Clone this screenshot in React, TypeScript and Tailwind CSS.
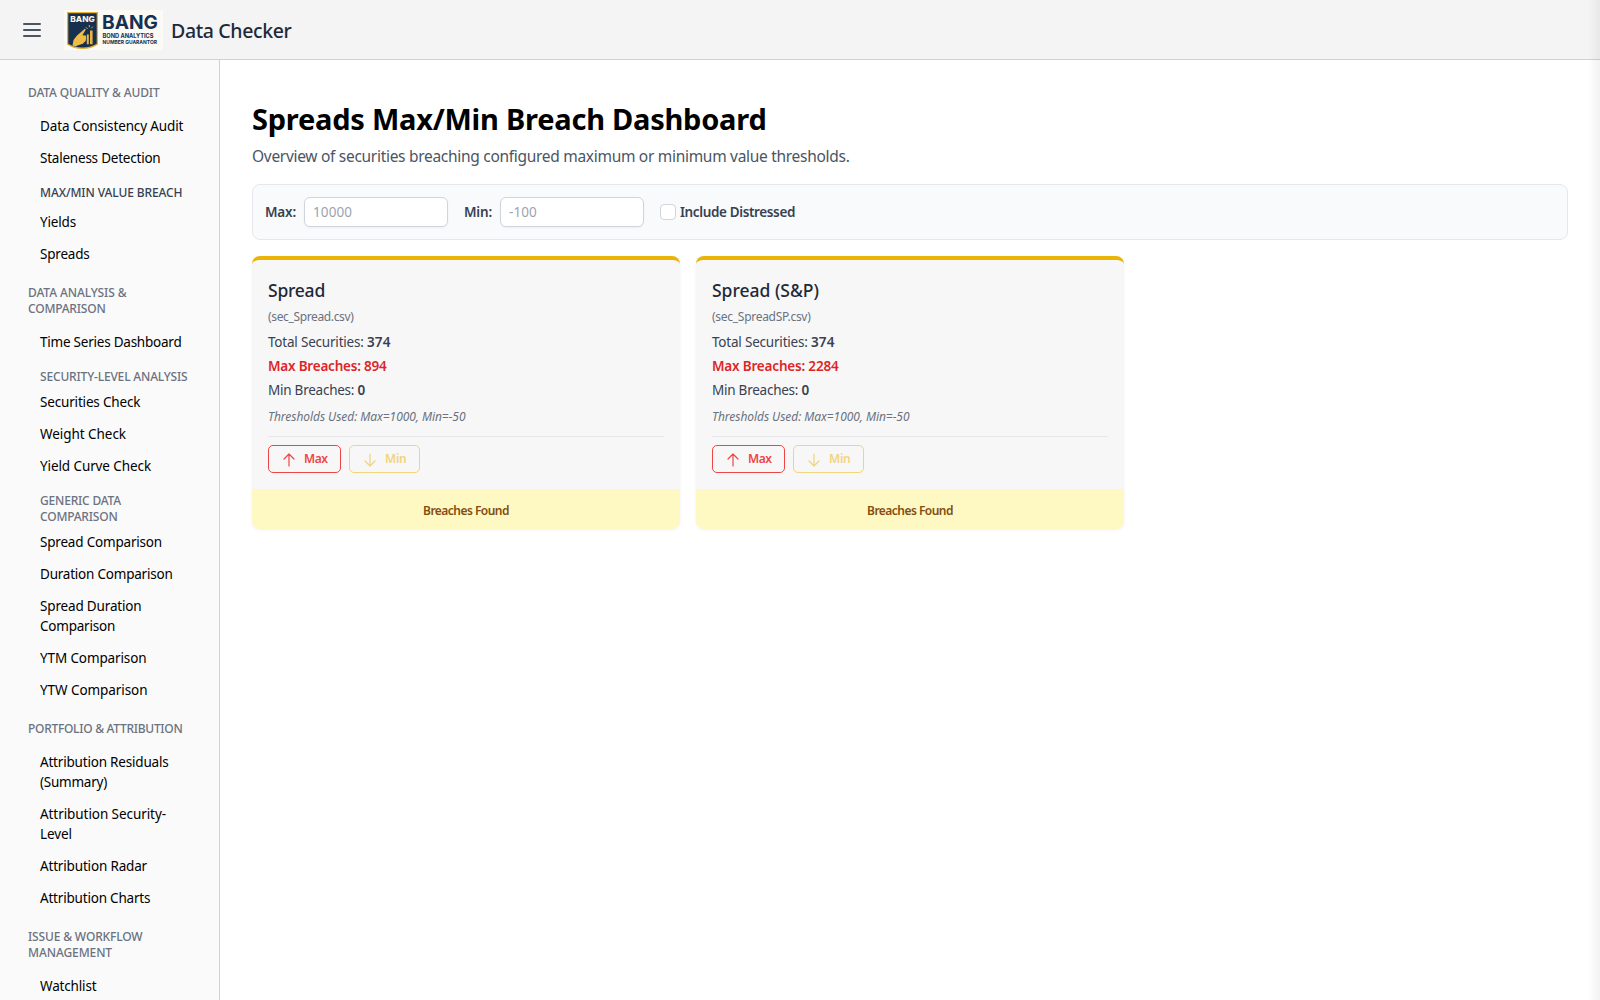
import React from "react";

type Line = { text: string; w: number };

/* One text run stretched or condensed to a fixed advance width. */
function Fit({ text, w, className = "" }: { text: string; w: number; className?: string }) {
  const ref = React.useRef<HTMLSpanElement>(null);
  React.useLayoutEffect(() => {
    const el = ref.current;
    if (!el) return;
    el.style.letterSpacing = "0px";
    const natural = el.getBoundingClientRect().width;
    el.style.letterSpacing = `${(w - natural) / text.length}px`;
  }, [text, w]);
  return (
    <span ref={ref} className={`inline-block whitespace-pre ${className}`}>
      {text}
    </span>
  );
}

const L = (text: string, w: number): Line => ({ text, w });

function Heading({ lines, className }: { lines: Line[]; className: string }) {
  return (
    <h3 className={`flex flex-col items-start pt-px text-[12px] leading-4 font-medium ${className}`}>
      {lines.map((l) => (
        <Fit key={l.text} text={l.text} w={l.w} />
      ))}
    </h3>
  );
}

function Link({ lines }: { lines: Line[] }) {
  return (
    <a className="flex flex-col items-start py-1.5 pl-10 text-[13.5px] leading-5 text-black">
      {lines.map((l) => (
        <Fit key={l.text} text={l.text} w={l.w} />
      ))}
    </a>
  );
}

function Logo() {
  return (
    <svg width="99" height="40" viewBox="0 0 99 40" className="block shrink-0">
      <rect width="99" height="40" fill="#fbfaf5" />
      <path d="M3 2h31v32.500c-3.500 2.700-9 4.500-15.500 4.500S6.500 37.200 3 34.500z" fill="#e3af35" />
      <path d="M4.300 3.300h28.400v30.400c-3.500 2.300-8.500 3.800-14.200 3.800s-10.700-1.500-14.200-3.800z" fill="#17304f" />
      <text x="6.300" y="12.300" fontFamily="Inter" fontWeight="800" fontSize="7.600" textLength="24.500" lengthAdjust="spacingAndGlyphs" fill="#f8f6ee">BANG</text>
      <path d="M8.500 35.500l1-5.500 3.500-4.500 7.800-6.700 1 .8-3.400 5.600 3.200.3.600 1.900-.5 3.500-2.900 2.900-4.700 1.400-2.600 1.300z" fill="#eebc45" />
      <path d="M22.800 24.500h2v9.800h-2zM26 20.500h2.600V34.300H26z" fill="#e8b53f" />
      <path d="M22 17.300l1.600 1.600M25.300 15v2.200M28.800 16.600l-1.600 1.700" stroke="#e8b53f" strokeWidth="1" />
      <text x="38" y="18.800" fontFamily="Inter" fontWeight="700" fontSize="19" textLength="56" lengthAdjust="spacingAndGlyphs" fill="#17304f">BANG</text>
      <text x="38.500" y="27.600" fontFamily="Inter" fontWeight="700" fontSize="5.800" textLength="51" lengthAdjust="spacingAndGlyphs" fill="#17304f">BOND ANALYTICS</text>
      <text x="38.500" y="34" fontFamily="Inter" fontWeight="700" fontSize="5.200" textLength="54.500" lengthAdjust="spacingAndGlyphs" fill="#17304f">NUMBER GUARANTOR</text>
    </svg>
  );
}

function Arrow({ down = false }: { down?: boolean }) {
  return (
    <svg width="16" height="16" viewBox="0 0 24 24" fill="none" stroke="currentColor" strokeWidth="1.8" strokeLinecap="round" strokeLinejoin="round" className="mt-0.5">
      {down ? <path d="M19.500 13.500L12 21l-7.500-7.500M12 21V3" /> : <path d="M4.500 10.500L12 3l7.500 7.500M12 3v18" />}
    </svg>
  );
}

interface CardProps {
  title: Line;
  file: Line;
  max: Line;
}

function Card({ title, file, max }: CardProps) {
  return (
    <section className="flex w-[428px] flex-col overflow-hidden rounded-lg border-t-4 border-[#eab308] bg-[#f7f7f7] shadow-[0_1px_3px_rgba(0,0,0,0.06)]">
      <div className="flex flex-col items-start p-4">
        <h2 className="text-[17.500px] leading-7 font-medium text-gray-800">
          <Fit {...title} />
        </h2>
        <p className="mt-[5px] text-[12px] leading-4 text-[#6b7280]">
          <Fit {...file} />
        </p>
        <p className="mt-[7px] flex text-[13.500px] leading-5 text-[#374151]">
          <Fit text="Total Securities: " w={99} />
          <Fit text="374" w={23.500} className="font-semibold" />
        </p>
        <p className="mt-1 text-[13.500px] leading-5 font-semibold text-[#dc2626]">
          <Fit {...max} />
        </p>
        <p className="mt-1 flex text-[13.500px] leading-5 text-[#374151]">
          <Fit text="Min Breaches: " w={89.500} />
          <Fit text="0" w={8} className="font-semibold" />
        </p>
        <p className="mt-[9px] text-[12px] leading-4 text-[#6b7280] italic">
          <Fit text="Thresholds Used: Max=1000, Min=-50" w={197.500} />
        </p>
        <div className="mt-[11px] flex w-full gap-2 border-t border-[#e5e7eb] pt-2">
          <button className="flex h-7 w-[73px] items-center rounded-[5px] border border-[#ef4444] pl-3 text-[12px] font-semibold text-[#ef4444]">
            <Arrow />
            <Fit text="Max" w={23.500} className="ml-[7px]" />
          </button>
          <button className="flex h-7 w-[71px] items-center rounded-[5px] border border-[#eab308] pl-3 text-[12px] font-semibold text-[#eab308] opacity-50">
            <Arrow down />
            <Fit text="Min" w={21.500} className="ml-[7px]" />
          </button>
        </div>
      </div>
      <div className="flex h-10 items-center justify-center bg-[#fef9c3] pt-[3px] text-[12px] font-semibold text-[#854d0e]">
        <Fit text="Breaches Found" w={86} />
      </div>
    </section>
  );
}

const inputClass =
  "mr-4 h-[30px] w-36 rounded-md border border-[#d1d5db] bg-white px-2 font-normal tracking-[0.1px] shadow-xs placeholder:text-[#9ca3af]";

export default function App() {
  const gray = "text-[#6b7280]";
  return (
    <div className="relative flex h-[1000px] w-[1600px] flex-col overflow-hidden bg-white font-['Noto_Sans','Open_Sans',sans-serif]">
      <header className="flex h-[60px] shrink-0 items-center border-b border-[#d1d1d1] bg-[#f4f4f4] pt-px pl-5">
        <svg width="24" height="24" viewBox="0 0 24 24" fill="none" stroke="#4b5563" strokeWidth="2" strokeLinecap="round" className="mr-5">
          <path d="M4 6h16M4 12h16M4 18h16" />
        </svg>
        <Logo />
        <h1 className="ml-2 pt-0.5 text-[19.500px] leading-7 font-medium text-gray-800">
          <Fit text="Data Checker" w={120.500} />
        </h1>
      </header>
      <div className="flex min-h-0 flex-1">
        <nav className="flex w-[220px] shrink-0 flex-col overflow-hidden border-r border-[#d1d1d1] bg-[#fafafa] pt-6">
          <Heading className={`mb-[9px] pl-7 ${gray}`} lines={[L("DATA QUALITY & AUDIT", 131.500)]} />
          <Link lines={[L("Data Consistency Audit", 143.300)]} />
          <Link lines={[L("Staleness Detection", 120.500)]} />
          <Heading className="mt-2.5 mb-[5px] pl-10 text-[#374151]" lines={[L("MAX/MIN VALUE BREACH", 142.500)]} />
          <Link lines={[L("Yields", 36)]} />
          <Link lines={[L("Spreads", 49.500)]} />
          <Heading className={`mt-3.5 mb-[9px] pl-7 ${gray}`} lines={[L("DATA ANALYSIS &", 98.500), L("COMPARISON", 77.500)]} />
          <Link lines={[L("Time Series Dashboard", 141.500)]} />
          <Heading className={`mt-2.5 mb-px pl-10 ${gray}`} lines={[L("SECURITY-LEVEL ANALYSIS", 147.500)]} />
          <Link lines={[L("Securities Check", 100.300)]} />
          <Link lines={[L("Weight Check", 86)]} />
          <Link lines={[L("Yield Curve Check", 111)]} />
          <Heading className={`mt-2.5 mb-px pl-10 ${gray}`} lines={[L("GENERIC DATA", 81), L("COMPARISON", 77.500)]} />
          <Link lines={[L("Spread Comparison", 122)]} />
          <Link lines={[L("Duration Comparison", 132.500)]} />
          <Link lines={[L("Spread Duration", 101.500), L("Comparison", 75)]} />
          <Link lines={[L("YTM Comparison", 106.500)]} />
          <Link lines={[L("YTW Comparison", 107.500)]} />
          <Heading className={`mt-3.5 mb-[9px] pl-7 ${gray}`} lines={[L("PORTFOLIO & ATTRIBUTION", 154.500)]} />
          <Link lines={[L("Attribution Residuals", 128.500), L("(Summary)", 67)]} />
          <Link lines={[L("Attribution Security-", 126), L("Level", 32)]} />
          <Link lines={[L("Attribution Radar", 107)]} />
          <Link lines={[L("Attribution Charts", 110.300)]} />
          <Heading className={`mt-3.5 mb-[9px] pl-7 ${gray}`} lines={[L("ISSUE & WORKFLOW", 114.500), L("MANAGEMENT", 84)]} />
          <Link lines={[L("Watchlist", 56.500)]} />
        </nav>
        <main className="flex min-w-0 flex-1 flex-col items-start pt-[39px] pr-8 pl-8">
          <h1 className="text-[29px] leading-10 font-bold text-black">
            <Fit text="Spreads Max/Min Breach Dashboard" w={514.500} />
          </h1>
          <p className="mt-[5px] text-[15.500px] leading-6 text-[#4b5563]">
            <Fit text="Overview of securities breaching configured maximum or minimum value thresholds." w={597.500} />
          </p>
          <div className="mt-4 flex h-14 w-full items-center rounded-lg border border-[#e5e7eb] bg-[#f9fafb] px-3 text-[13.500px] font-semibold text-[#374151]">
            <Fit text="Max:" w={31} className="mr-2" />
            <input placeholder="10000" className={inputClass} />
            <Fit text="Min:" w={28} className="mr-2" />
            <input placeholder="-100" className={inputClass} />
            <span className="mr-1 size-4 rounded-sm border border-[#d1d5db] bg-white" />
            <Fit text="Include Distressed" w={115} />
          </div>
          <div className="mt-4 flex gap-4">
            <Card title={L("Spread", 57)} file={L("(sec_Spread.csv)", 85.500)} max={L("Max Breaches: 894", 118.500)} />
            <Card title={L("Spread (S&P)", 107)} file={L("(sec_SpreadSP.csv)", 98.500)} max={L("Max Breaches: 2284", 126.500)} />
          </div>
        </main>
      </div>
      <div className="pointer-events-none absolute inset-y-0 right-0 w-3 bg-linear-to-l from-black/5 to-transparent" />
    </div>
  );
}
